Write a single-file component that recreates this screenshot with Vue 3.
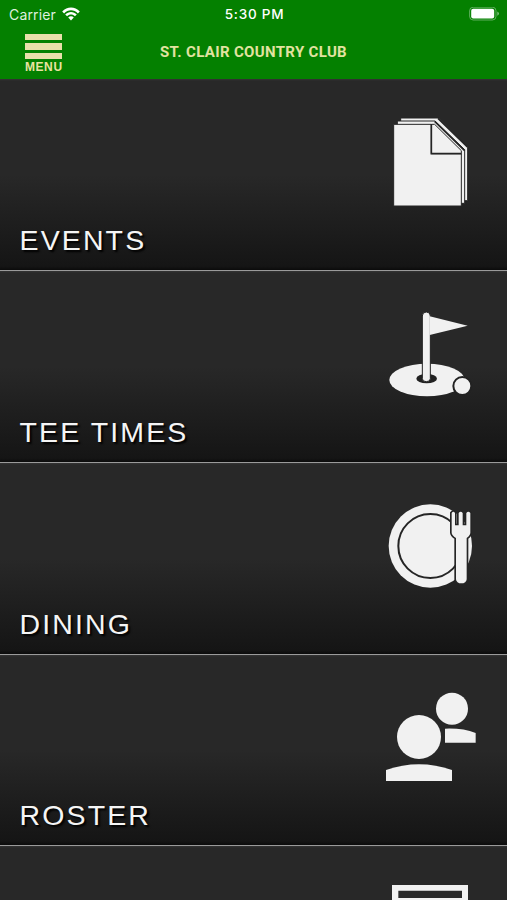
<script setup>
const rows = [
  { label: 'EVENTS', icon: 'events', box: '0 0 330 345' },
  { label: 'TEE TIMES', icon: 'golf', box: '0 -9 330 345' },
  { label: 'DINING', icon: 'dining', box: '0 -4 330 345' },
  { label: 'ROSTER', icon: 'roster', box: '0 3 330 345' },
  { label: '', icon: 'screen', box: '0 99 330 345' }
]
</script>

<template>
  <div class="phone">
    <header class="header">
      <div class="status">
        <div class="carrier">
          <span>Carrier</span>
          <svg class="wifi" viewBox="0 0 18 14" width="18" height="14">
            <path d="M0.2 4.6C5-.8 13-.8 17.8 4.6L15.9 6.4C12 2.2 6 2.2 2.1 6.4Z" />
            <path d="M3.2 7.5C6.4 4.1 11.6 4.1 14.8 7.5L12.9 9.2C10.7 6.9 7.3 6.9 5.1 9.2Z" />
            <path d="M6.2 10.4C7.8 8.9 10.2 8.9 11.8 10.4L9 13.5Z" />
          </svg>
        </div>
        <span class="time">5:30 PM</span>
        <svg class="battery" viewBox="0 0 31 14" width="31" height="14">
          <rect x=".6" y=".2" width="26.4" height="12.8" rx="3.6" fill="none" stroke="#fff" stroke-opacity=".36" stroke-width="1" />
          <rect x="2.2" y="1.8" width="23" height="9.6" rx="2" fill="#fff" />
          <path d="M28.3 4.4Q30 5.1 30 6.6T28.3 8.8Z" fill="#fff" fill-opacity=".5" />
        </svg>
      </div>
      <div class="titlebar">
        <div class="menu">
          <i></i><i></i><i></i>
          <span>MENU</span>
        </div>
        <h1>ST. CLAIR COUNTRY CLUB</h1>
      </div>
    </header>
    <section v-for="r in rows" :key="r.icon" class="row">
      <h2>{{ r.label }}</h2>
      <svg class="icon" :viewBox="r.box" width="110" height="115">
        <g v-if="r.icon === 'events'" stroke="#252525" stroke-width="3">
          <path d="M71 39H185L272 125V287H71Z" />
          <path d="M61 48H174L263 134V295H61Z" />
          <path d="M50 58H162L253 146V303H50Z" />
          <path d="M163 58H173L253 137V146H163Z" />
          <path d="M173 49L263 137M183 40L271 126" fill="none" stroke-width="5" />
          <path d="M163 57V146H253" fill="none" stroke-width="5" />
        </g>
        <g v-else-if="r.icon === 'golf'">
          <ellipse cx="150" cy="240" rx="113" ry="49" />
          <ellipse cx="149" cy="236" rx="31" ry="14" fill="#222" />
          <path d="M136 236V48A12 12 0 0 1 160 48V236A12 9 0 0 1 136 236Z" stroke="#222" stroke-width="3" />
          <path d="M158 49L272 77L158 105Z" />
          <circle cx="256" cy="258" r="27" stroke="#222" stroke-width="6" />
        </g>
        <g v-else-if="r.icon === 'dining'">
          <circle cx="160" cy="167" r="125" />
          <circle cx="160" cy="167" r="96" fill="none" stroke="#252525" stroke-width="6" />
          <path d="M224 68Q229 61 234 68V105H245V68Q251 61 257 68V105H268V68Q274 61 280 68V127Q280 134 269 143V267A16 12 0 0 1 237 267V143Q224 134 224 127Z" stroke="#252525" stroke-width="10" paint-order="stroke" />
        </g>
        <g v-else-if="r.icon === 'roster'">
          <circle cx="225" cy="86" r="48" />
          <circle cx="126" cy="171" r="66" />
          <path d="M204 146Q258 144 296 159V188H204Z" />
          <path d="M27 270Q126 236 225 270V303H27Z" />
        </g>
        <g v-else>
          <path fill-rule="evenodd" d="M45 138H273V450H45ZM64 155V177H255V155Z" />
        </g>
      </svg>
    </section>
  </div>
</template>

<style>
body { margin: 0; overflow: hidden; }
</style>

<style scoped>
.phone {
  width: 507px;
  height: 900px;
  overflow: hidden;
  background: #282828;
  font-family: "Liberation Sans", Arial, sans-serif;
}
.header { height: 79px; background: #048000; }
.status {
  display: grid;
  grid-template-columns: 1fr auto 1fr;
  align-items: center;
  height: 27px;
  padding: 0 7px 0 9px;
  box-sizing: border-box;
  color: #fff;
  font: 14px/27px Inter, sans-serif;
}
.carrier { display: flex; align-items: center; gap: 6px; color: #dff0df; letter-spacing: .15px; }
.wifi { fill: #fff; margin-top: -1px; }
.time { font-size: 13.5px; line-height: 27px; font-weight: 500; letter-spacing: .75px; padding-top: 1px; }
.battery { justify-self: end; }
.titlebar {
  display: grid;
  grid-template-columns: 87px 1fr 87px;
  height: 52px;
}
.menu {
  display: flex;
  flex-direction: column;
  align-items: center;
  gap: 3px;
  padding-top: 7px;
  color: #eae3a1;
}
.menu i { width: 37px; height: 6.3px; background: #e9dfaa; flex: none; }
.menu span { font-size: 12px; line-height: 10px; font-weight: 700; letter-spacing: .6px; margin-right: -.6px; }
h1 {
  margin: 0;
  color: #e2e3a0;
  text-align: center;
  font: 700 15px/50px Roboto, sans-serif;
  letter-spacing: .33px;
}
.row {
  display: flex;
  justify-content: space-between;
  height: 192px;
  box-sizing: border-box;
  border-bottom: 1px solid #9a9a9a;
  padding: 0 20px;
  background: linear-gradient(#343434 0, #282828 2px, #282828 50%, #151515 98%, #0b0b0b 100%);
}
.row:nth-of-type(4) { height: 191px; }
h2 {
  align-self: flex-end;
  margin: 0 0 13px -.4px;
  color: #f5f5f5;
  font-size: 28.5px;
  line-height: 34px;
  font-weight: 400;
  letter-spacing: 2.1px;
  text-shadow: 2px 2px 2px #000;
}
.row:nth-of-type(n + 3) h2 { margin-bottom: 13.5px; }
.icon { margin-top: 26px; fill: #f1f1f1; overflow: hidden; }
</style>
